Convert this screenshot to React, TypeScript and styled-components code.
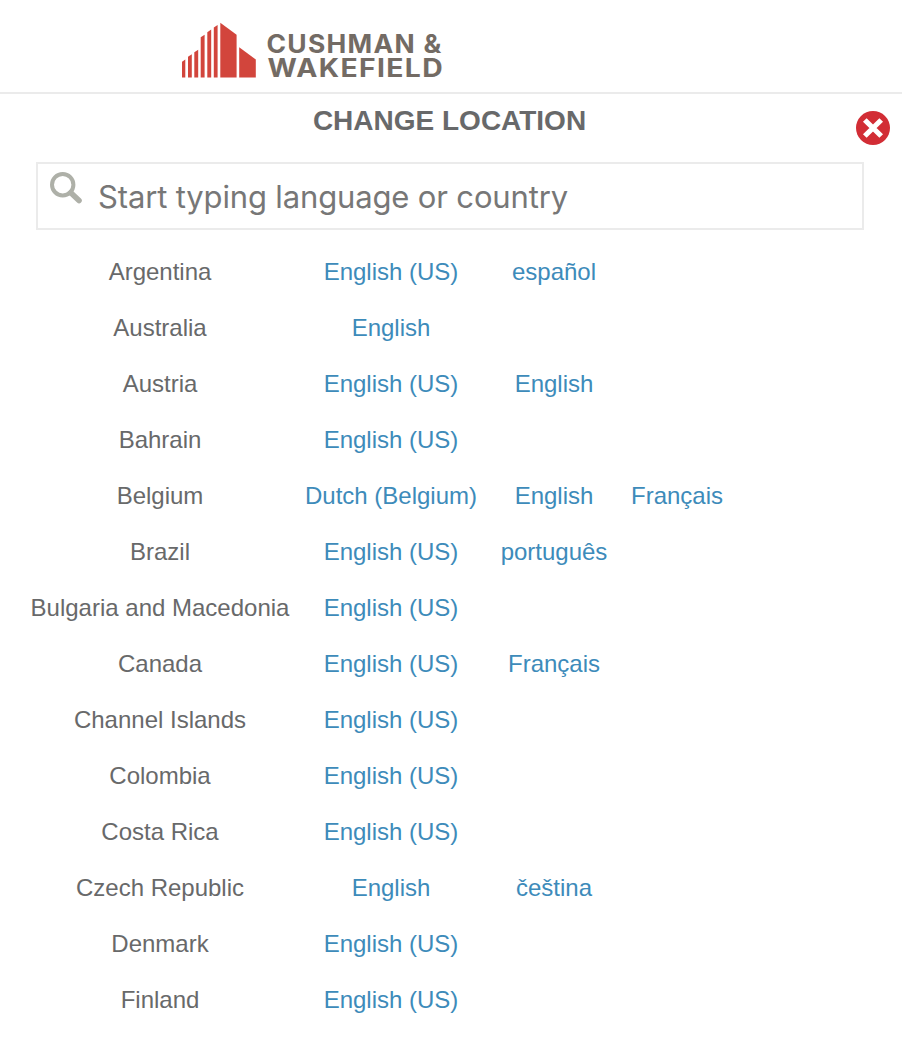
import React from "react";
import styled, { createGlobalStyle } from "styled-components";

const GlobalStyle = createGlobalStyle`
  * { box-sizing: border-box; }
  body {
    margin: 0;
    background: #fff;
    font-family: "Liberation Sans", Arial, sans-serif;
    color: #68696a;
  }
`;

const Page = styled.div`
  width: 902px;
  height: 1044px;
  overflow: hidden;
  background: #fff;
`;

const Header = styled.header`
  height: 94px;
  padding: 20px 0 0 180px;
  border-bottom: 2px solid #ebebeb;
`;

const LogoSvg = styled.svg`
  display: block;
`;

const Wordmark = styled.text`
  font-family: Inter, sans-serif;
  font-weight: 700;
  font-size: 25px;
  letter-spacing: 1.2px;
  fill: #736b64;
`;

const TitleBar = styled.div`
  display: grid;
  grid-template-columns: 1fr 46px;
  height: 68px;
`;

const Title = styled.h1`
  margin: 0;
  padding: 11px 0 0 43px;
  font-size: 28px;
  line-height: 32px;
  font-weight: 700;
  text-align: center;
  color: #68696a;
`;

const CloseButton = styled.button`
  align-self: start;
  width: 34px;
  height: 34px;
  margin-top: 17px;
  padding: 0;
  border: 0;
  background: none;
  svg { display: block; }
`;

const SearchBox = styled.div`
  display: flex;
  align-items: flex-start;
  width: 828px;
  height: 68px;
  margin-left: 36px;
  padding: 7px 0 0 12px;
  border: 2px solid #ebebeb;
`;

const SearchInput = styled.input`
  flex: 1;
  height: 50px;
  margin: 0 0 0 15px;
  padding: 0;
  border: 0;
  outline: none;
  background: none;
  font-family: Inter, sans-serif;
  font-size: 31px;
  letter-spacing: -0.15px;
  &::placeholder { color: #777; opacity: 1; }
`;

const LocationList = styled.div`
  padding: 14px 0 0 20px;
`;

const LocationRow = styled.div`
  display: grid;
  grid-template-columns: 280px 182px 144px 102px;
  height: 56px;
  font-size: 24px;
  line-height: 56px;
  text-align: center;
  white-space: nowrap;
`;

const Country = styled.span`
  color: #68696a;
`;

const LanguageLink = styled.a`
  color: #3d8bba;
  text-decoration: none;
`;

const locations: [string, string[]][] = [
  ["Argentina", ["English (US)", "español"]],
  ["Australia", ["English"]],
  ["Austria", ["English (US)", "English"]],
  ["Bahrain", ["English (US)"]],
  ["Belgium", ["Dutch (Belgium)", "English", "Français"]],
  ["Brazil", ["English (US)", "português"]],
  ["Bulgaria and Macedonia", ["English (US)"]],
  ["Canada", ["English (US)", "Français"]],
  ["Channel Islands", ["English (US)"]],
  ["Colombia", ["English (US)"]],
  ["Costa Rica", ["English (US)"]],
  ["Czech Republic", ["English", "čeština"]],
  ["Denmark", ["English (US)"]],
  ["Finland", ["English (US)"]],
];

const Logo = () => (
  <LogoSvg width="270" height="64" viewBox="0 0 270 64">
    <g fill="#d2453c">
      <path d="M2 41.7L5.3 39.5V57.4H2z" />
      <path d="M8 36.8L11.8 34.2V57.4H8z" />
      <path d="M14.3 32.2L18.2 29.7V57.4H14.3z" />
      <path d="M20.7 17.2L24.6 14.7V57.4H20.7z" />
      <path d="M27.3 12.2L31.2 9.6V57.4H27.3z" />
      <path d="M33.8 7.6L37.6 4.9V57.4H33.8z" />
      <path d="M40.3 2.8L56.6 14.7V57.4H40.3z" />
      <path d="M59.2 27.3L75.8 39.4V57.4H59.2z" />
    </g>
    <Wordmark x="86.5" y="33.2" textLength="176" lengthAdjust="spacingAndGlyphs">CUSHMAN &amp;</Wordmark>
    <Wordmark x="87.5" y="57.4" textLength="176.5" lengthAdjust="spacingAndGlyphs">WAKEFIELD</Wordmark>
  </LogoSvg>
);

const CloseIcon = () => (
  <svg width="34" height="34" viewBox="0 0 34 34">
    <circle cx="17" cy="17" r="17" fill="#d22d35" />
    <path d="M8.8 9L25.2 25M25.2 9L8.8 25" stroke="#fff" strokeWidth="5.2" />
  </svg>
);

const SearchIcon = () => (
  <svg width="33" height="33" viewBox="0 0 33 33" fill="none" stroke="#aeb0a8">
    <circle cx="12.7" cy="13.7" r="10.7" strokeWidth="4" />
    <path d="M20.8 21.7L29 29.5" strokeWidth="5.6" strokeLinecap="round" />
  </svg>
);

export default function App() {
  return (
    <>
      <GlobalStyle />
      <Page>
        <Header>
          <Logo />
        </Header>
        <TitleBar>
          <Title>CHANGE LOCATION</Title>
          <CloseButton aria-label="Close">
            <CloseIcon />
          </CloseButton>
        </TitleBar>
        <SearchBox>
          <SearchIcon />
          <SearchInput placeholder="Start typing language or country" />
        </SearchBox>
        <LocationList>
          {locations.map(([country, languages]) => (
            <LocationRow key={country}>
              <Country>{country}</Country>
              {languages.map((language) => (
                <LanguageLink key={language}>{language}</LanguageLink>
              ))}
            </LocationRow>
          ))}
        </LocationList>
      </Page>
    </>
  );
}
